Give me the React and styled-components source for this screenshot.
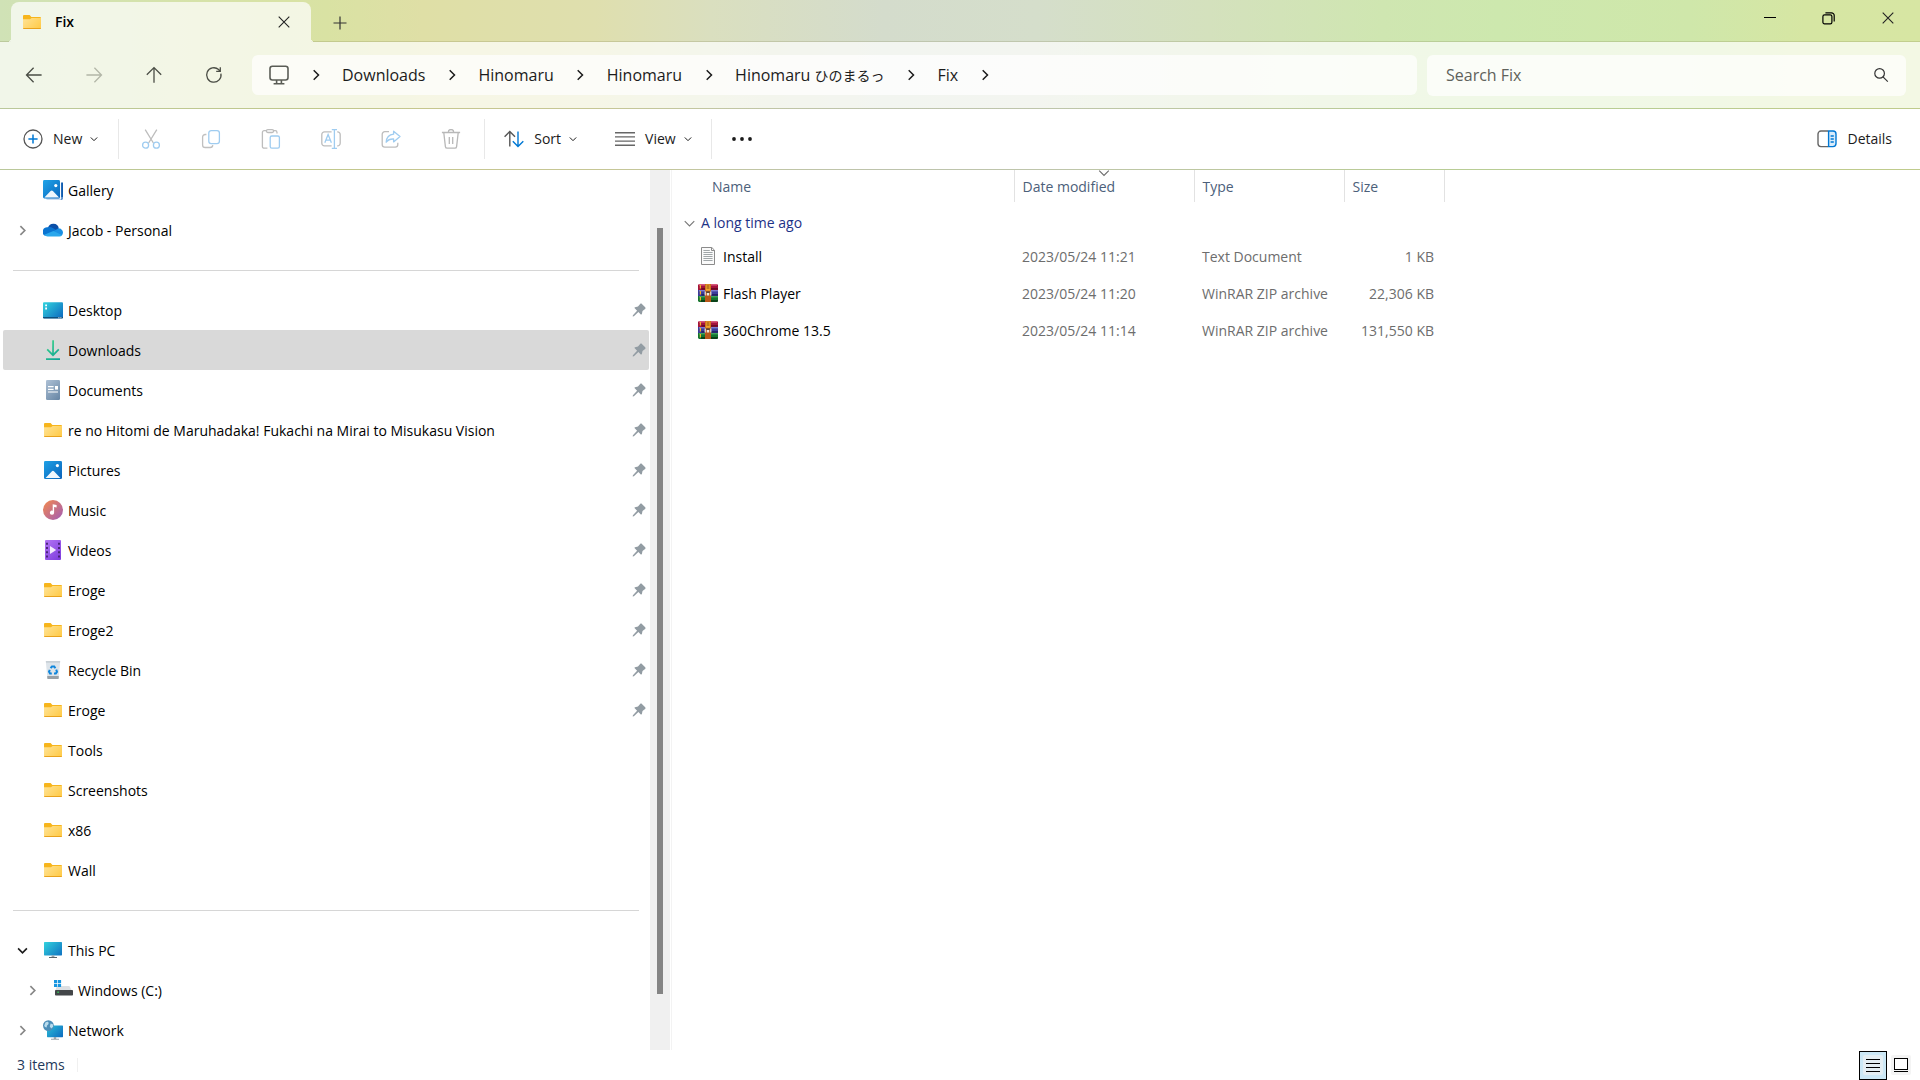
import React from "react";
import styled, { createGlobalStyle } from "styled-components";

const GlobalStyle = createGlobalStyle`
  * {
    box-sizing: border-box;
  }
  body {
    margin: 0;
    background: #fff;
    color: #1b1b1b;
    font-family: "Open Sans", "Noto Sans", "Noto Sans CJK JP", sans-serif;
    font-size: 14px;
    line-height: 20px;
  }
  button,
  input {
    font: inherit;
    color: inherit;
    border: 0;
    padding: 0;
    background: none;
  }
  a {
    color: inherit;
    text-decoration: none;
  }
  svg {
    display: block;
    flex: none;
  }
`;

const SWindow = styled.div`
  display: flex;
  flex-direction: column;
  min-height: 100vh;
`;

const SChrome = styled.header`
  background: linear-gradient(
    90deg,
    #d0e2b6 0%,
    #d5e2aa 9%,
    #d9e2a3 17%,
    #dfdfa6 22%,
    #dfdfae 31%,
    #dadfbf 37%,
    #d4dccc 46%,
    #d5decb 54%,
    #d4e1bd 63%,
    #cfe6b1 72%,
    #cde8ae 78%,
    #cfe7aa 88%,
    #d6e6a3 94%,
    #d7e6a3 100%
  );
`;

const SLine = styled.div`
  height: 1px;
  background: rgba(110, 110, 60, 0.22);
`;

const STitleBar = styled.div`
  display: flex;
  height: 42px;
`;

const STitleEdge = styled.div`
  width: 11px;
  border-bottom: 1px solid rgba(110, 110, 60, 0.2);
`;

const STab = styled.div`
  position: relative;
  display: flex;
  align-items: center;
  width: 300px;
  margin-top: 2px;
  padding: 0 21px 0 11px;
  gap: 13px;
  border-radius: 8px 8px 0 0;
  background: rgba(255, 255, 255, 0.7);
  color: #000;
  font-weight: 600;

  /* 탭 아래쪽 바깥 곡선 */
  &::before,
  &::after {
    content: "";
    position: absolute;
    bottom: 0;
    width: 4px;
    height: 4px;
  }
  &::before {
    right: 100%;
    background: radial-gradient(circle at 0 0, transparent 4px, rgba(255, 255, 255, 0.7) 4px);
  }
  &::after {
    left: 100%;
    background: radial-gradient(circle at 100% 0, transparent 4px, rgba(255, 255, 255, 0.7) 4px);
  }
`;

const STabName = styled.span`
  flex: 1;
`;

const STitleRest = styled.div`
  flex: 1;
  display: flex;
  justify-content: space-between;
  padding: 0 3px 0 13px;
  border-bottom: 1px solid rgba(110, 110, 60, 0.2);
`;

const SNewTab = styled.button`
  display: grid;
  place-items: center;
  width: 32px;
  padding-top: 4px;
`;

const SWindowButtons = styled.div`
  display: flex;
  height: 36px;
`;

const SWindowButton = styled.button`
  display: grid;
  place-items: center;
  width: 59px;
`;

const SNavBar = styled.div`
  display: flex;
  align-items: center;
  gap: 10px;
  height: 66px;
  padding: 0 14px;
  background: rgba(255, 255, 255, 0.7);
`;

const SNavButtons = styled.div`
  display: flex;
  gap: 20px;
  margin-right: 8px;
`;

const SNavButton = styled.button`
  display: grid;
  place-items: center;
  width: 40px;
  height: 40px;
  color: #4a4d45;

  &:disabled {
    color: #b3b7a8;
  }
`;

const SAddress = styled.nav`
  flex: 1;
  display: flex;
  align-items: center;
  height: 40px;
  padding-left: 17px;
  border-radius: 6px;
  background: rgba(255, 255, 255, 0.7);
  font-size: 16px;
`;

const SCrumbArrow = styled.span`
  display: grid;
  place-items: center;
  width: 53px;
`;

const SJapanese = styled.span`
  font-family: "Noto Sans CJK JP", sans-serif;
  font-size: 14px;
`;

const SSearch = styled.label`
  display: flex;
  align-items: center;
  width: 479px;
  height: 41px;
  padding: 0 17px 0 19px;
  border-radius: 6px;
  background: rgba(255, 255, 255, 0.7);
  font-size: 16px;
`;

const SSearchInput = styled.input`
  flex: 1;
  outline: none;

  &::placeholder {
    color: #5f625b;
    opacity: 1;
  }
`;

const SCommandBar = styled.div`
  display: flex;
  align-items: center;
  height: 60px;
  background: #fff;
`;

const SCommand = styled.button`
  display: flex;
  align-items: center;
  gap: 8px;
  height: 40px;
  padding: 0 ${(props) => props.$right || 19}px 0 ${(props) => props.$left || 19}px;
  margin-left: ${(props) => (props.$end ? "auto" : 0)};

  svg:first-child {
    margin-right: 2px;
  }
`;

const SIconCommand = styled.button`
  display: grid;
  place-items: center;
  width: 60px;
  height: 40px;
`;

const SDivider = styled.div`
  width: 1px;
  height: 40px;
  background: #e8e8e8;
`;

const SIconGroup = styled.div`
  display: flex;
  padding: 0 3px 0 2px;
`;

const SBody = styled.div`
  flex: 1;
  display: flex;
`;

const SSidebar = styled.nav`
  width: 650px;
  padding: 0 1px 0 3px;
`;

const SList = styled.ul`
  margin: 0;
  padding: 0;
  list-style: none;
`;

const SItem = styled.a`
  display: flex;
  align-items: center;
  height: 40px;
  padding: 0 3px 0 ${(props) => (props.$nested ? 23 : 13)}px;
  border-radius: 2px;
  background: ${(props) => (props.$active ? "#d9d9d9" : "transparent")};
  color: #000;
`;

const SItemArrow = styled.span`
  display: grid;
  place-items: center;
  width: 12px;
  margin-right: 15px;
  color: ${(props) => (props.$open ? "#1b1b1b" : "#868686")};
`;

const SItemName = styled.span`
  flex: 1;
  padding: 1px 0 0 5px;
`;

const SSeparator = styled.hr`
  height: 1px;
  margin: 20px 10px 19px;
  border: 0;
  background: #d6d6d6;
`;

const STrack = styled.div`
  display: flex;
  width: 20px;
  padding: 58px 7px 56px;
  background: #f0f0f0;
`;

const SThumb = styled.div`
  flex: 1;
  background: #858585;
`;

const SFiles = styled.main`
  flex: 1;
  margin-left: 1px;
  border-left: 1px solid #f3f3f3;
`;

const STable = styled.table`
  table-layout: fixed;
  width: 772px;
  border-collapse: collapse;
`;

const STh = styled.th`
  position: relative;
  width: ${(props) => props.$width}px;
  height: 32px;
  padding: 2px 0 0 ${(props) => props.$left || 8}px;
  border-right: 1px solid #e2e2e2;
  color: #4c607a;
  font-weight: 400;
  text-align: left;
`;

const SSortMark = styled.span`
  position: absolute;
  top: -3px;
  left: 50%;
  margin-left: -6px;
  color: #6b6b6b;
`;

const SGroupCell = styled.th`
  height: 36px;
  padding: 6px 0 0 12px;
  color: #1e3287;
  font-weight: 400;
`;

const SGroup = styled.button`
  display: flex;
  align-items: center;
  gap: 6px;
`;

const STd = styled.td`
  height: 37px;
  padding: 0 10px 0 ${(props) => props.$left || 8}px;
  color: #6d6d6d;
  text-align: ${(props) => (props.$right ? "right" : "left")};
  white-space: nowrap;
`;

const SFileName = styled.a`
  display: flex;
  align-items: center;
  gap: 5px;
  color: #000;
`;

const SStatusBar = styled.footer`
  display: flex;
  align-items: center;
  height: 30px;
  padding: 0 9px 0 17px;
  color: #1e395b;
`;

const SCount = styled.span`
  margin-right: auto;
  padding-right: 12px;
  border-right: 1px solid #f0f0f0;
  line-height: 14px;
`;

const SViewButton = styled.button`
  display: grid;
  place-items: center;
  width: ${(props) => (props.$active ? 28 : 20)}px;
  height: 29px;
  margin-left: 4px;
  border: ${(props) => (props.$active ? "1px solid #000" : "0")};
  background: ${(props) => (props.$active ? "#cce8f6" : "none")};
`;

const Svg = ({ w = 20, h = 20, box, children, ...rest }) => (
  <svg width={w} height={h} viewBox={box || `0 0 ${w} ${h}`} fill="none" aria-hidden="true" {...rest}>
    {children}
  </svg>
);

// 화살표
const Chevron = ({ dir = "right", size = 12, weight = 1.5 }) => (
  <Svg w={size} h={size} box="0 0 12 12" stroke="currentColor" strokeWidth={weight}>
    {dir === "right" ? <path d="M3.7 1.2 8.5 6 3.7 10.8" /> : <path d="M1.2 3.7 6 8.5 10.8 3.7" />}
  </Svg>
);

const CloseIcon = () => (
  <Svg w={12} h={12} stroke="#222" strokeWidth="1.1">
    <path d="M.7.7l10.6 10.6M11.3.7.7 11.3" />
  </Svg>
);

const BackIcon = () => (
  <Svg w={18} h={18} stroke="currentColor" strokeWidth="1.3">
    <path d="M16.6 9H1.8M8.6 1.8 1.5 9l7.1 7.2" />
  </Svg>
);

const ForwardIcon = () => (
  <Svg w={18} h={18} stroke="currentColor" strokeWidth="1.3">
    <path d="M1.4 9h14.8M9.4 1.8 16.5 9l-7.1 7.2" />
  </Svg>
);

const UpIcon = () => (
  <Svg w={18} h={18} stroke="currentColor" strokeWidth="1.3">
    <path d="M9 16.8V1.8M1.8 8.8 9 1.6l7.2 7.2" />
  </Svg>
);

const RefreshIcon = () => (
  <Svg w={18} h={18} stroke="currentColor" strokeWidth="1.3">
    <path d="M15.9 7.6A7.2 7.2 0 1 1 13.6 3.6L15 5M15.3 1.2V5.3H11.2" />
  </Svg>
);

const MonitorIcon = () => (
  <Svg stroke="#5a5c56" strokeWidth="1.6">
    <rect x="1" y="1.2" width="18" height="13.8" rx="2.4" />
    <path d="M7.6 15v3.4M12.4 15v3.4M4.6 18.7h10.8" />
  </Svg>
);

const SearchIcon = () => (
  <Svg w={16} h={16} stroke="#333" strokeWidth="1.2">
    <circle cx="6.6" cy="6.4" r="4.8" />
    <path d="M10 9.9l4.8 4.8" />
  </Svg>
);

const NewIcon = () => (
  <Svg strokeWidth="1.3">
    <circle cx="10" cy="10" r="9" stroke="#555" />
    <path d="M10 5.4v9.2M5.4 10h9.2" stroke="#0078d4" strokeWidth="1.5" />
  </Svg>
);

const CutIcon = () => (
  <Svg strokeWidth="1.3">
    <path d="M4.2.6 12.4 14M15.8.6 7.6 14" stroke="#bdbdbd" />
    <circle cx="4.6" cy="16.2" r="3" stroke="#9fccf0" />
    <circle cx="15.4" cy="16.2" r="3" stroke="#9fccf0" />
  </Svg>
);

const CopyIcon = () => (
  <Svg strokeWidth="1.3">
    <path d="M5.4 5.5H4.2a2.6 2.6 0 0 0-2.6 2.6v7.8a2.6 2.6 0 0 0 2.6 2.6h5a2.6 2.6 0 0 0 2.6-2.4" stroke="#c0c0c0" />
    <rect x="7.8" y="1.6" width="10.6" height="13" rx="2.4" stroke="#9fccf0" />
  </Svg>
);

const PasteIcon = () => (
  <Svg strokeWidth="1.3">
    <path d="M6.4 19.2H3.2a1.8 1.8 0 0 1-1.8-1.8V3.4a1.8 1.8 0 0 1 1.8-1.8h2.2M12.6 1.6h1.6A1.8 1.8 0 0 1 16 3.4v1.2" stroke="#bdbdbd" />
    <rect x="5.4" y=".7" width="7.2" height="2.8" rx="1.4" stroke="#bdbdbd" />
    <rect x="9.2" y="7" width="9.2" height="12.2" rx="1.6" stroke="#9fccf0" />
  </Svg>
);

const RenameIcon = () => (
  <Svg strokeWidth="1.3">
    <path d="M10.6 2.9H3.4A2.6 2.6 0 0 0 .8 5.5v8.8a2.6 2.6 0 0 0 2.6 2.6h7.2M16.2 2.9h.4a2.6 2.6 0 0 1 2.6 2.6v8.8a2.6 2.6 0 0 1-2.6 2.6h-.4" stroke="#bdbdbd" />
    <path d="M3.8 13.8 7.1 5.6l3.3 8.2M5 11.2h4.3M10.8.7h5.2M13.4.7v18.6M10.8 19.3h5.2" stroke="#9fccf0" />
  </Svg>
);

const ShareIcon = () => (
  <Svg strokeWidth="1.3" strokeLinejoin="round">
    <path d="M8 2.7H3.8a2.6 2.6 0 0 0-2.6 2.6v10.3a2.6 2.6 0 0 0 2.6 2.6h10.4a2.6 2.6 0 0 0 2.6-2.6v-1.8" stroke="#bdbdbd" />
    <path d="M12.6 2.2 19 7.6l-6.4 5.3V10c-3.6-.2-5.8 1-7.4 3.2.3-4.6 2.8-7.6 7.4-8z" stroke="#9fccf0" />
  </Svg>
);

const DeleteIcon = () => (
  <Svg stroke="#b8b8b8" strokeWidth="1.3">
    <path d="M.9 3.5h18.2M7.3 3.2a2.7 2.7 0 0 1 5.4 0M2.8 3.8 4.4 17.6a1.8 1.8 0 0 0 1.8 1.6h7.6a1.8 1.8 0 0 0 1.8-1.6L17.2 3.8M8.3 8v7M11.7 8v7" />
  </Svg>
);

const SortIcon = () => (
  <Svg strokeWidth="1.4">
    <path d="M5.8 17.4V2.8M.6 7.8 5.8 2.4 11 7.8" stroke="#555" />
    <path d="M14 2.6v14.6M8.8 12.2l5.2 5.4 5.3-5.4" stroke="#0078d4" />
  </Svg>
);

const ViewIcon = () => (
  <Svg stroke="#666" strokeWidth="1.4">
    <path d="M0 3.7h20M0 7.9h20M0 12.1h20M0 16.3h20" />
  </Svg>
);

const DotsIcon = () => (
  <Svg fill="#1b1b1b">
    <circle cx="2" cy="10" r="1.9" />
    <circle cx="10" cy="10" r="1.9" />
    <circle cx="18" cy="10" r="1.9" />
  </Svg>
);

const DetailsIcon = () => (
  <Svg strokeWidth="1.4">
    <path d="M11 2H4a3 3 0 0 0-3 3v9.6a3 3 0 0 0 3 3h7" stroke="#666" />
    <path d="M11.6 2H16a3 3 0 0 1 3 3v9.6a3 3 0 0 1-3 3h-4.4z" fill="#d9ecfb" stroke="#0078d4" />
    <path d="M13.6 7h3.2M13.6 10h3.2M13.6 13h3.2" stroke="#0078d4" />
  </Svg>
);

const PinIcon = () => (
  <Svg w={14} h={14} fill="#929ca3">
    <path d="M8.1 1c.5-.5 1.3-.5 1.8-.1l3.3 3.3c.5.5.4 1.3-.1 1.8L10.5 8.1l-.6 3c-.1.5-.7.7-1.1.3L6.4 9 1.9 13.2l-1.2.2.2-1.1L5.1 7.7 2.7 5.3c-.4-.4-.2-1 .3-1.1l3-.6z" />
  </Svg>
);

const FolderIcon = () => (
  <Svg>
    <path d="M1 4a1 1 0 0 1 1-1h5.6L9.4 5H18a1 1 0 0 1 1 1v3H1z" fill="#f7b51c" />
    <path d="M1 7.2h7L9.6 6H19v10a1 1 0 0 1-1 1H2a1 1 0 0 1-1-1z" fill="url(#folder)" />
    <path d="M1 16h18a1 1 0 0 1-1 1H2a1 1 0 0 1-1-1z" fill="#e9a21c" />
  </Svg>
);

const GalleryIcon = () => (
  <Svg>
    <path d="M3 18.4h14.6V3H19a1 1 0 0 1 1 1v14.6a1.4 1.4 0 0 1-1.4 1.4H4.4A1.4 1.4 0 0 1 3 18.6z" fill="#5b92cf" />
    <path d="M18 2.4h2V17h-2z" fill="#0f5cb0" />
    <path d="M17.6 1.4V19.2H2" stroke="#fff" />
    <rect width="17" height="18.4" rx="1.4" fill="url(#blue)" />
    <path d="M1.4 17.4 7.6 11a1.6 1.6 0 0 1 2.3 0l6.2 6.4z" fill="#f0f7fd" />
    <circle cx="12.8" cy="5.6" r="1.6" fill="#fff" />
  </Svg>
);

const CloudIcon = () => (
  <Svg>
    <path d="M5 7.6A5.6 5.6 0 0 1 15.8 8.2L12 13z" fill="#0b4fa8" />
    <path d="M4.6 7.2c2.2-.6 3.8 0 5.2.8l4.6 2.8L2 15.8A4.6 4.6 0 0 1 4.6 7.2z" fill="#0a74d1" />
    <path d="M10.6 11.2 15.4 8.2A4.4 4.4 0 0 1 19.2 15l-4 .8z" fill="#1a8fe3" />
    <path d="M1.2 14.8 10.4 11l8.8 4.2a3.8 3.8 0 0 1-3 1.4H4.6a4.6 4.6 0 0 1-3.4-1.8z" fill="#2aa7ec" />
  </Svg>
);

const DesktopIcon = () => (
  <Svg>
    <rect y="2.2" width="20" height="16" rx="1" fill="url(#teal)" />
    <path d="M0 17h20v.4a1 1 0 0 1-1 1H1a1 1 0 0 1-1-1z" fill="#0c4f7d" />
    <path d="M2.2 4.4h1.8v1.8H2.2zM2.2 7.6h1.8v1.8H2.2zM15.4 17.2h1v1h-1zM17.4 17.2h1v1h-1z" fill="#fff" />
  </Svg>
);

const DownloadIcon = () => (
  <Svg stroke="url(#green)" strokeWidth="1.7">
    <path d="M10.1.3 10 15M4.2 9.4 10 15.2l5.8-5.8M3 19.1l14 .1" />
  </Svg>
);

const DocumentIcon = () => (
  <Svg>
    <rect x="3" width="14" height="20" rx="1.2" fill="url(#slate)" />
    <path d="M5 6.6h5.6M5 9.4h5.6M5 12h10" stroke="#fff" strokeWidth="1.1" />
    <path d="M12 6h3v3.6h-3z" fill="#fff" />
  </Svg>
);

const PictureIcon = () => (
  <Svg>
    <rect x="1" y="1" width="18" height="18" rx="1.3" fill="url(#blue)" />
    <path d="M2.6 18 8.7 11.4a1.7 1.7 0 0 1 2.5 0l6.2 6.6z" fill="#f0f7fd" />
    <circle cx="14.4" cy="5.6" r="1.6" fill="#fff" />
  </Svg>
);

const MusicIcon = () => (
  <Svg>
    <circle cx="10" cy="10" r="10" fill="url(#music)" />
    <path d="M9.7 4.2 13.6 5v2.6l-2.5-.5v5.6a2.1 2.1 0 1 1-1.4-2z" fill="#fff" />
  </Svg>
);

const VideoIcon = () => (
  <Svg>
    <rect x="2" width="16" height="20" rx="1" fill="url(#violet)" />
    <path d="M4 2.8v15M16 2.8v15" stroke="#43206f" strokeWidth="1.8" strokeDasharray="2 2.2" />
    <path d="M7 6v8l6.2-4z" fill="#f3eafd" />
  </Svg>
);

const BinIcon = () => (
  <Svg>
    <path d="M2.8 1.6h14.4L15.8 16H4.2z" fill="#dde4ea" />
    <path d="M2.8 1h14.4l-.2 1.8H3z" fill="#c8d0d6" />
    <path d="M4.2 16h11.6v2.2a.8.8 0 0 1-.8.8H5a.8.8 0 0 1-.8-.8z" fill="#98a1a8" />
    <path d="M7.6 8.2 9 6.4h2.2l1.2 1.8M13.2 9.6l.8 2.2-1.2 1.8h-1.8M8.8 13.6H7l-1-1.8.8-2" stroke="#0f86dc" strokeWidth="2" />
  </Svg>
);

const PcIcon = () => (
  <Svg>
    <rect x="1" y="2" width="18" height="13.4" rx=".6" fill="url(#teal)" />
    <path d="M8.6 15.4h2.8v2H8.6z" fill="#9aa4aa" />
    <path d="M6 17h8v1H6z" fill="#59636a" />
  </Svg>
);

const DriveIcon = () => (
  <Svg>
    <path d="M4 6h12.4l2.6 5H2z" fill="#dcdfe2" />
    <rect x="2" y="10" width="18" height="5.6" rx=".8" fill="#434649" />
    <path d="M4.4 11.6h1.4V13H4.4z" fill="#35d05a" />
    <path d="M1 0h3.2v3.2H1zM4.9 0h3.2v3.2H4.9zM1 3.9h3.2v3.2H1zM4.9 3.9h3.2v3.2H4.9z" fill="#1795e0" />
  </Svg>
);

const NetworkIcon = () => (
  <Svg>
    <rect x="4" y="5.4" width="16" height="11.8" rx=".6" fill="url(#teal)" />
    <path d="M10.8 17h2.4v2h-2.4zM8 18.8h8v1H8z" fill="#9aa4aa" />
    <circle cx="5.4" cy="5.6" r="5.4" fill="#4b8db8" />
    <path d="M2.4 2.6c2-1.6 3.4-.8 3.2.8s-2 1.4-1.8 3.2-1.8.6-2.6-.8zM7.6 3.4l2.2.8.4 2.6-2 1.6-1.4-2z" fill="#b9dced" />
  </Svg>
);

const TextFileIcon = () => (
  <Svg>
    <path d="M3.5.5h10.3l2.7 2.7v14.3h-13z" fill="#fafafa" stroke="#8b8b8b" />
    <path d="M13.5.5v3h3" stroke="#8b8b8b" />
    <path d="M5.4 3.5h6.4M5.4 5.5h9.2M5.4 7.5h9.2M5.4 9.5h9.2M5.4 11.5h9.2M5.4 13.5h9.2" stroke="#a0a6a8" />
  </Svg>
);

// 책 세 권과 벨트
const ArchiveIcon = () => (
  <Svg>
    <path d="M1 0h18l1 1v5H0V1z" fill="#a3123c" />
    <path d="M1 0h18v1.6H1z" fill="#d8577a" />
    <path d="M3.4 4.2H20v1.4H3.4z" fill="#5f0a22" />
    <path d="M0 6h20v6H0z" fill="#3b3c9c" />
    <path d="M1 6h19v1.4H1z" fill="#7d7dd0" />
    <path d="M3.4 10.2H20v1.4H3.4z" fill="#1d1d55" />
    <path d="M0 12h20v5l-1 1H1l-1-1z" fill="#12752f" />
    <path d="M1 12h19v1.4H1z" fill="#3fa55c" />
    <path d="M3 16h17v1.2l-1 .8H3z" fill="#0a4218" />
    <path d="M2.4 1v3.6M2.4 7v3.6M2.4 13v3.6" stroke="#f0b429" strokeWidth="1.2" />
    <path d="M7 0h6v18H7z" fill="#b9581a" />
    <path d="M7.6.4h4.8v6.4H7.6z" fill="#f0a52a" />
    <path d="M8.6 2h2.8M8.6 4h2.8" stroke="#8a4a10" />
    <path d="M6.6 7.4h1.2v4.2H6.6zM12.2 7.4h1.2v4.2h-1.2zM8.8 8.8h2.4v2.8H8.8z" fill="#ece6dc" />
    <path d="M8.2 7.4h3.6v1.6H8.2z" fill="#5a4636" />
  </Svg>
);

const Gradient = ({ id, from, to }) => (
  <linearGradient id={id} x1="0" y1="0" x2="20" y2="20" gradientUnits="userSpaceOnUse">
    <stop stopColor={from} />
    <stop offset="1" stopColor={to} />
  </linearGradient>
);

const SDefs = styled.svg`
  position: absolute;
  width: 0;
  height: 0;
`;

// 아이콘에서 같이 쓰는 그라데이션
const Gradients = () => (
  <SDefs aria-hidden="true">
    <defs>
      <Gradient id="folder" from="#ffe9a8" to="#ffc63a" />
      <Gradient id="blue" from="#1fa4e8" to="#0a5fb8" />
      <Gradient id="teal" from="#35dbe0" to="#0a62bd" />
      <Gradient id="green" from="#3ddc84" to="#0a9a9a" />
      <Gradient id="slate" from="#b4c6da" to="#5f7f9f" />
      <Gradient id="music" from="#f58a4b" to="#a05cb8" />
      <Gradient id="violet" from="#b578f5" to="#7a37dc" />
    </defs>
  </SDefs>
);

const places = [
  { name: "Gallery", icon: GalleryIcon },
  { name: "Jacob - Personal", icon: CloudIcon, arrow: "right" },
];

const quickAccess = [
  { name: "Desktop", icon: DesktopIcon, pinned: true },
  { name: "Downloads", icon: DownloadIcon, pinned: true, active: true },
  { name: "Documents", icon: DocumentIcon, pinned: true },
  { name: "re no Hitomi de Maruhadaka! Fukachi na Mirai to Misukasu Vision", icon: FolderIcon, pinned: true },
  { name: "Pictures", icon: PictureIcon, pinned: true },
  { name: "Music", icon: MusicIcon, pinned: true },
  { name: "Videos", icon: VideoIcon, pinned: true },
  { name: "Eroge", icon: FolderIcon, pinned: true },
  { name: "Eroge2", icon: FolderIcon, pinned: true },
  { name: "Recycle Bin", icon: BinIcon, pinned: true },
  { name: "Eroge", icon: FolderIcon, pinned: true },
  { name: "Tools", icon: FolderIcon },
  { name: "Screenshots", icon: FolderIcon },
  { name: "x86", icon: FolderIcon },
  { name: "Wall", icon: FolderIcon },
];

const devices = [
  { name: "This PC", icon: PcIcon, arrow: "down" },
  { name: "Windows (C:)", icon: DriveIcon, arrow: "right", nested: true },
  { name: "Network", icon: NetworkIcon, arrow: "right" },
];

const files = [
  { name: "Install", icon: TextFileIcon, date: "2023/05/24 11:21", type: "Text Document", size: "1 KB" },
  { name: "Flash Player", icon: ArchiveIcon, date: "2023/05/24 11:20", type: "WinRAR ZIP archive", size: "22,306 KB" },
  { name: "360Chrome 13.5", icon: ArchiveIcon, date: "2023/05/24 11:14", type: "WinRAR ZIP archive", size: "131,550 KB" },
];

const crumbs = [
  "Downloads",
  "Hinomaru",
  "Hinomaru",
  <>
    Hinomaru <SJapanese>ひのまるっ</SJapanese>
  </>,
  "Fix",
];

const fileCommands = [
  ["Cut", CutIcon],
  ["Copy", CopyIcon],
  ["Paste", PasteIcon],
  ["Rename", RenameIcon],
  ["Share", ShareIcon],
  ["Delete", DeleteIcon],
];

const PlaceList = ({ items }) => (
  <SList>
    {items.map(({ name, icon: Icon, arrow, pinned, active, nested }, i) => (
      <li key={i}>
        <SItem href="#" $active={active} $nested={nested}>
          <SItemArrow $open={arrow === "down"}>{arrow && <Chevron dir={arrow} size={11} weight={1.8} />}</SItemArrow>
          <Icon />
          <SItemName>{name}</SItemName>
          {pinned && <PinIcon />}
        </SItem>
      </li>
    ))}
  </SList>
);

const TitleBar = () => (
  <STitleBar>
    <STitleEdge />
    <STab>
      <FolderIcon />
      <STabName>Fix</STabName>
      <button aria-label="Close tab">
        <CloseIcon />
      </button>
    </STab>
    <STitleRest>
      <SNewTab aria-label="New tab">
        <Svg w={14} h={14} stroke="#333" strokeWidth="1.2">
          <path d="M7 .5v13M.5 7h13" />
        </Svg>
      </SNewTab>
      <SWindowButtons>
        <SWindowButton aria-label="Minimize">
          <Svg w={12} h={12} stroke="#000">
            <path d="M0 5.5h12" />
          </Svg>
        </SWindowButton>
        <SWindowButton aria-label="Restore">
          <Svg w={13} h={13} stroke="#000" strokeWidth="1.2">
            <rect x=".9" y="2.9" width="9" height="9" rx="1.6" />
            <path d="M3.4.8h6A2.7 2.7 0 0 1 12.2 3.6v6" />
          </Svg>
        </SWindowButton>
        <SWindowButton aria-label="Close">
          <CloseIcon />
        </SWindowButton>
      </SWindowButtons>
    </STitleRest>
  </STitleBar>
);

const NavBar = () => (
  <SNavBar>
    <SNavButtons>
      <SNavButton aria-label="Back">
        <BackIcon />
      </SNavButton>
      <SNavButton aria-label="Forward" disabled>
        <ForwardIcon />
      </SNavButton>
      <SNavButton aria-label="Up">
        <UpIcon />
      </SNavButton>
      <SNavButton aria-label="Refresh">
        <RefreshIcon />
      </SNavButton>
    </SNavButtons>
    <SAddress aria-label="Address">
      <MonitorIcon />
      <SCrumbArrow>
        <Chevron />
      </SCrumbArrow>
      {crumbs.map((crumb, i) => (
        <React.Fragment key={i}>
          <a href="#">{crumb}</a>
          <SCrumbArrow>
            <Chevron />
          </SCrumbArrow>
        </React.Fragment>
      ))}
    </SAddress>
    <SSearch>
      <SSearchInput type="text" placeholder="Search Fix" aria-label="Search Fix" />
      <SearchIcon />
    </SSearch>
  </SNavBar>
);

const CommandBar = () => (
  <SCommandBar>
    <SCommand $left={23} $right={20}>
      <NewIcon />
      New
      <Chevron dir="down" size={8} />
    </SCommand>
    <SDivider />
    <SIconGroup>
      {fileCommands.map(([label, Icon]) => (
        <SIconCommand key={label} aria-label={label} disabled>
          <Icon />
        </SIconCommand>
      ))}
    </SIconGroup>
    <SDivider />
    <SCommand>
      <SortIcon />
      Sort
      <Chevron dir="down" size={8} />
    </SCommand>
    <SCommand>
      <ViewIcon />
      View
      <Chevron dir="down" size={8} />
    </SCommand>
    <SDivider />
    <SIconCommand aria-label="See more">
      <DotsIcon />
    </SIconCommand>
    <SCommand $end $right={28}>
      <DetailsIcon />
      Details
    </SCommand>
  </SCommandBar>
);

const FileTable = () => (
  <STable>
    <thead>
      <tr>
        <STh $width={342} $left={40}>
          Name
        </STh>
        <STh $width={180}>
          Date modified
          <SSortMark>
            <Chevron dir="down" size={12} weight={1.1} />
          </SSortMark>
        </STh>
        <STh $width={150}>Type</STh>
        <STh $width={100}>Size</STh>
      </tr>
    </thead>
    <tbody>
      <tr>
        <SGroupCell colSpan={4}>
          <SGroup>
            <Svg w={11} h={11} box="0 0 12 12" stroke="#777" strokeWidth="1.2">
              <path d="M.8 3.4 6 8.6l5.2-5.2" />
            </Svg>
            A long time ago
          </SGroup>
        </SGroupCell>
      </tr>
      {files.map(({ name, icon: Icon, date, type, size }) => (
        <tr key={name}>
          <STd $left={26}>
            <SFileName href="#">
              <Icon />
              {name}
            </SFileName>
          </STd>
          <STd>{date}</STd>
          <STd>{type}</STd>
          <STd $right>{size}</STd>
        </tr>
      ))}
    </tbody>
  </STable>
);

const App = () => {
  return (
    <SWindow>
      <GlobalStyle />
      <Gradients />
      <SChrome>
        <TitleBar />
        <NavBar />
        <SLine />
        <CommandBar />
        <SLine />
      </SChrome>
      <SBody>
        <SSidebar aria-label="Folders">
          <PlaceList items={places} />
          <SSeparator />
          <PlaceList items={quickAccess} />
          <SSeparator />
          <PlaceList items={devices} />
        </SSidebar>
        <STrack>
          <SThumb />
        </STrack>
        <SFiles>
          <FileTable />
        </SFiles>
      </SBody>
      <SStatusBar>
        <SCount>3 items</SCount>
        <SViewButton $active aria-label="Details view">
          <Svg stroke="#000">
            <rect width="20" height="20" rx="2" fill="#e4eef3" stroke="none" />
            <path d="M3 4.5h14M3 8.5h14M3 12.5h14M3 16.5h14" />
          </Svg>
        </SViewButton>
        <SViewButton aria-label="Large icons view">
          <Svg stroke="#000">
            <rect width="20" height="20" rx="2" fill="#f4f4f4" stroke="none" />
            <rect x="3.5" y="3.5" width="13" height="11" fill="#fff" />
            <path d="M3 16.5h14" />
          </Svg>
        </SViewButton>
      </SStatusBar>
    </SWindow>
  );
};

export default App;
